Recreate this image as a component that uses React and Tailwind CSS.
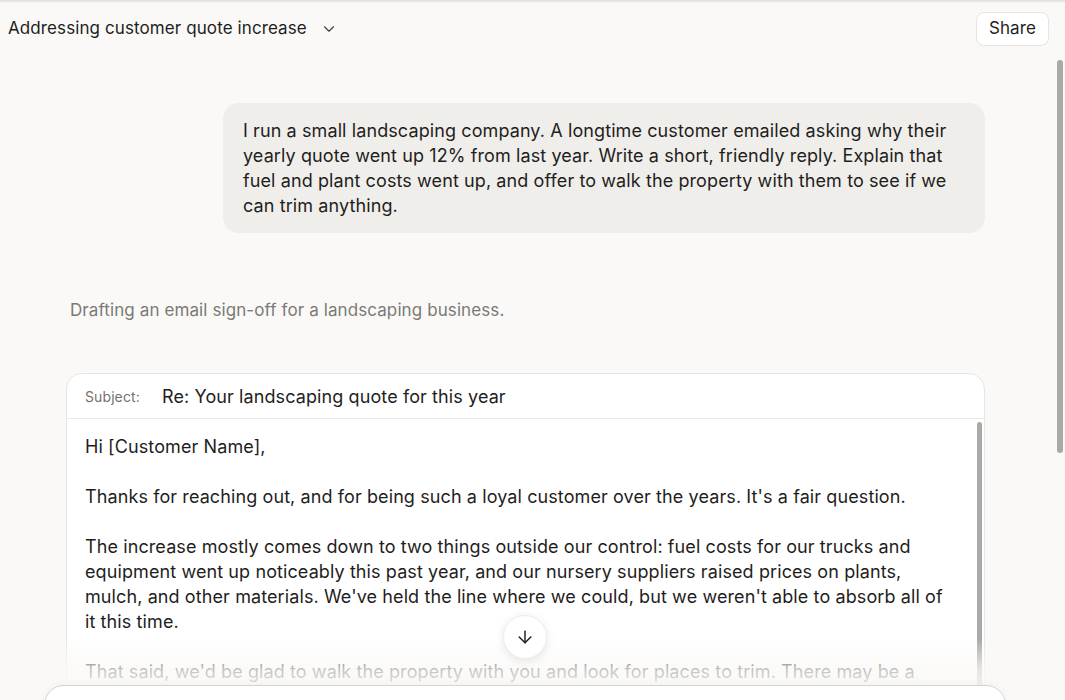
import React from 'react';
import { ChevronDown, ArrowDown } from 'lucide-react';

const font = { fontFamily: 'Inter, "Noto Sans", sans-serif', letterSpacing: '0.1px' };

function Header() {
  return (
    <header className="h-[57px] shrink-0 flex items-center justify-between pl-2 pr-4">
      <button className="flex items-center gap-[13px] text-[17px] text-[#1f1e1d]">
        <span>Addressing customer quote increase</span>
        <ChevronDown size={18} strokeWidth={1.5} className="text-[#3d3d3a]" />
      </button>
      <button className="h-[34px] px-3 rounded-lg border border-[#e6e4df] bg-white text-[17px] text-[#1f1e1d]">
        Share
      </button>
    </header>
  );
}

function EmailCard() {
  return (
    <div className="mt-[51px] w-[919px] rounded-t-2xl border border-[#e8e6e1] bg-white">
      <div className="h-[45px] flex items-center border-b border-[#ebe9e5] px-[18px]">
        <span className="w-[77px] text-[14px] text-[#73726e]">Subject:</span>
        <span className="text-[18px] text-[#1f1e1d]">Re: Your landscaping quote for this year</span>
      </div>
      <div className="flex">
        <div className="flex-1 pl-[18px] pt-[15px] text-[18px] leading-[25px] text-[#1f1e1d]">
          <p className="mb-[25px]">Hi [Customer Name],</p>
          <p className="mb-[25px]">
            Thanks for reaching out, and for being such a loyal customer over the years. It's a fair question.
          </p>
          <p className="mb-[25px]">
            The increase mostly comes down to two things outside our control: fuel costs for our trucks and
            <br />
            equipment went up noticeably this past year, and our nursery suppliers raised prices on plants,
            <br />
            mulch, and other materials. We've held the line where we could, but we weren't able to absorb all of
            <br />
            it this time.
          </p>
          <p>
            That said, we'd be glad to walk the property with you and look for places to trim. There may be a
          </p>
        </div>
        <div className="mr-[2px] pt-[3px]">
          <div className="h-[300px] w-[5px] rounded-full bg-[#a9a9a9]" />
        </div>
      </div>
    </div>
  );
}

export default function App() {
  return (
    <div style={font} className="relative h-[700px] w-full overflow-hidden bg-[#faf9f7] flex flex-col">
      <div className="absolute top-0 left-0 right-0 h-[3px] bg-gradient-to-b from-[#d9d9d9] to-transparent" />
      <Header />
      <div className="flex-1 flex min-h-0">
        <main className="flex-1 pl-[66px] pt-[46px] overflow-hidden">
          <div className="flex justify-end w-[919px]">
            <div className="w-[762px] rounded-2xl bg-[#f0eeeb] px-5 py-[15px] text-[18px] leading-[25px] text-[#1f1e1d]">
              I run a small landscaping company. A longtime customer emailed asking why their
              <br />
              yearly quote went up 12% from last year. Write a short, friendly reply. Explain that
              <br />
              fuel and plant costs went up, and offer to walk the property with them to see if we
              <br />
              can trim anything.
            </div>
          </div>
          <p className="mt-[65px] pl-1 text-[17px] leading-[24px] text-[#7b7a76]">
            Drafting an email sign-off for a landscaping business.
          </p>
          <EmailCard />
        </main>
        <div className="w-[8px] pt-[3px]">
          <div className="h-[393px] w-[6px] rounded-full bg-[#a9a9a9]" />
        </div>
      </div>

      {/* fade + scroll button + composer */}
      <div className="pointer-events-none absolute left-0 right-0 bottom-0 h-[62px] bg-gradient-to-b from-[#faf9f7]/0 via-[#faf9f7]/75 to-[#faf9f7]" />
      <button className="absolute left-[503px] top-[615px] h-[44px] w-[44px] rounded-full bg-white shadow-[0_2px_10px_rgba(0,0,0,0.1)] border border-[#efede9] flex items-center justify-center">
        <ArrowDown size={20} strokeWidth={1.75} className="text-[#1f1e1d]" />
      </button>
      <div className="absolute left-[44px] top-[685px] w-[962px] h-[40px] rounded-t-[20px] border border-[#d6d4cf] bg-white shadow-[0_-2px_10px_rgba(0,0,0,0.03)]" />
    </div>
  );
}
